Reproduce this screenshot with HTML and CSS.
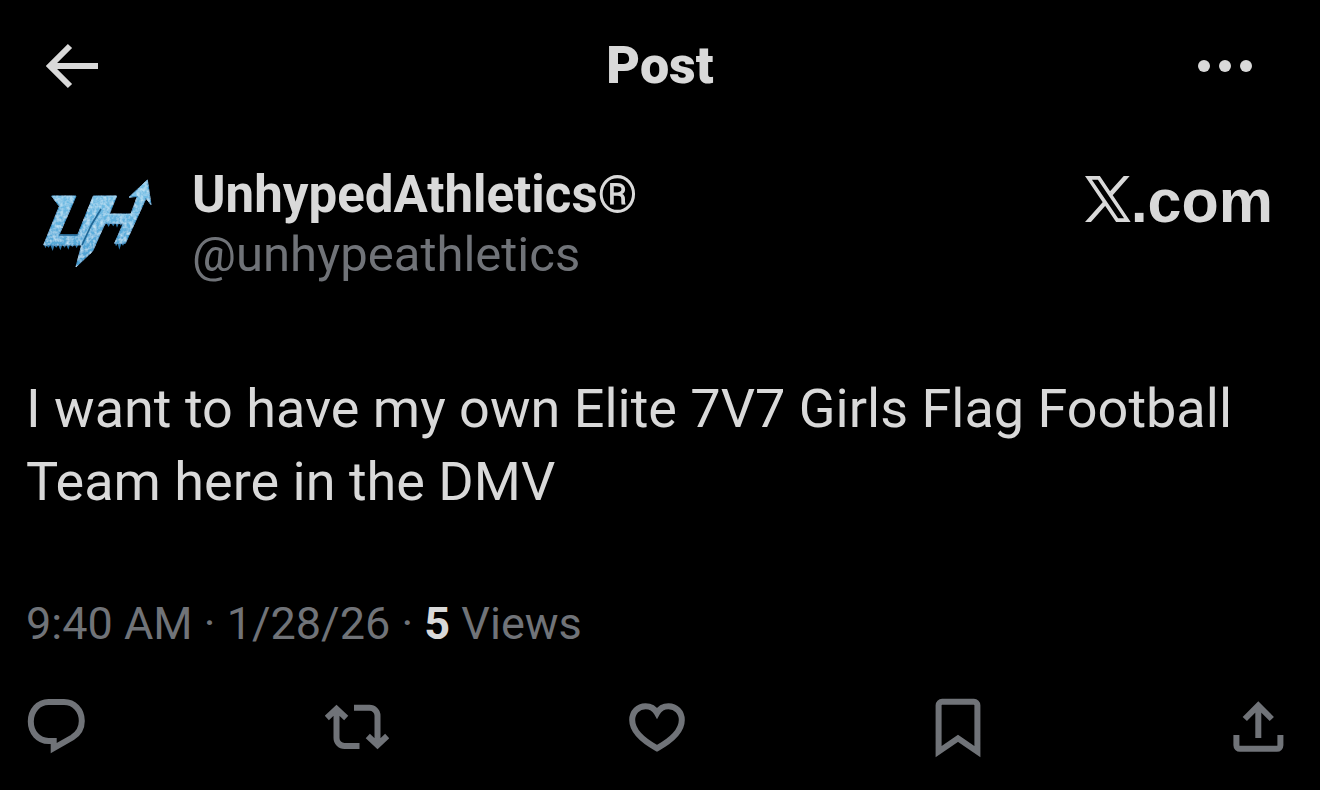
FILE: index.html
```html
<!DOCTYPE html>
<html lang="en">
<head>
    <meta charset="UTF-8">
    <meta name="viewport" content="width=device-width, initial-scale=1.0">
    <title>Post</title>
    <link rel="stylesheet" href="styles.css">
</head>
<body>
    <!-- Top Bar -->
    <header class="topbar">
        <button class="icon-btn back" type="button" aria-label="Back">
            <svg width="56" height="56" viewBox="0 0 56 56"><path d="M26 8L6 28L26 48M6 28H54"/></svg>
        </button>
        <h1>Post</h1>
        <button class="icon-btn more" type="button" aria-label="More">
            <svg width="56" height="56" viewBox="0 0 56 56">
                <circle cx="7" cy="28" r="6"/>
                <circle cx="28" cy="28" r="6"/>
                <circle cx="49" cy="28" r="6"/>
            </svg>
        </button>
    </header>

    <main class="post">
        <!-- Author -->
        <div class="author">
            <svg class="avatar" viewBox="18 0 360 360" aria-hidden="true">
                <defs>
                    <linearGradient id="ice" x1="0" y1="0" x2="0" y2="1">
                        <stop offset="0" stop-color="#7cc4e8"/>
                        <stop offset="0.5" stop-color="#62b2de"/>
                        <stop offset="1" stop-color="#4a9fd2"/>
                    </linearGradient>
                    <filter id="frost">
                        <feTurbulence type="fractalNoise" baseFrequency="0.1" numOctaves="2" seed="4"/>
                        <feColorMatrix values="0 0 0 0 0.66  0 0 0 0 0.86  0 0 0 0 0.95  1.6 0 0 0 -0.6"/>
                        <feComposite in2="SourceGraphic" operator="in" result="grain"/>
                        <feMerge>
                            <feMergeNode in="SourceGraphic"/>
                            <feMergeNode in="grain"/>
                        </feMerge>
                    </filter>
                </defs>
                <!-- icicles -->
                <path fill="#2c78ab" d="M42 238l4 12 4-8 6 6 5-8 7 18 5-16 6 6 6-8 6 16 6-16 7 8 5-8 6 14 5-14 8 6 6-8 6 12 8-18zM218 172l5 12 6-10 7 12 6-12 8 10 6-10 5 14 6-14 6 8 8-14zM254 232l4 12 5-8 5 18 6-18 5 6 7-12zM168 250l2 26 6-18 6 10 8-30z"/>
                <g filter="url(#frost)">
                    <path fill="url(#ice)" stroke="#3c8fc4" stroke-width="3" d="M65 93H138L129 114L87 210H143L190 93H260L238 147H303L322 94L297 97L352 45L363 119L348 100L286 235H254L280 175H225L205 220L188 258L138 306L155 240H41L88 124Z"/>
                </g>
                <path fill="none" stroke="#1f6796" stroke-width="5" d="M213 132L184 180L156 240M87 210H143"/>
                <path fill="none" stroke="#a5dbf2" stroke-width="2" d="M68 94H136M192 94H258M224 149H302"/>
            </svg>
            <div class="names">
                <a class="name" href="#">UnhypedAthletics®</a>
                <a class="handle" href="#">@unhypeathletics</a>
            </div>
            <div class="brand">
                <svg width="46" height="46" viewBox="43 438 139 139" role="img" aria-label="X">
                    <path fill-rule="evenodd" d="M43 438H88L181 577H137ZM64 449L143 566H161L82 449Z"/>
                    <path d="M160 438H178L126 497L118 485ZM43 577H61L107 525L99 514Z"/>
                </svg>
                <span>.com</span>
            </div>
        </div>

        <!-- Post Text -->
        <p class="text">I want to have my own Elite 7V7 Girls Flag Football Team here in the DMV</p>

        <div class="meta">9:40 AM · 1/28/26 · <strong>5</strong> Views</div>

        <!-- Actions -->
        <div class="actions">
            <button class="icon-btn" type="button" aria-label="Reply">
                <svg width="64" height="64" viewBox="0 0 64 64"><path d="M24.5 7H40C50 7 57.8 15 57.8 26C57.8 33 54 39 48.3 42.5L29.7 53V46H24.5C14.5 46 6.8 37.5 6.8 26.5S14.5 7 24.5 7Z"/></svg>
            </button>
            <button class="icon-btn" type="button" aria-label="Repost">
                <svg width="64" height="64" viewBox="0 0 64 64"><path d="M11.5 14V43a8 8 0 0 0 8 8H34.5M1.8 23L11.5 13.8L21.2 23M29 12.7H44.5a8 8 0 0 1 8 8V50M42.8 41L52.5 50.2L62.2 41"/></svg>
            </button>
            <button class="icon-btn" type="button" aria-label="Like">
                <svg width="64" height="64" viewBox="0 0 64 64"><path d="M32 18C29.5 13.5 25.5 11.2 20.5 11.2C13 11.2 7.2 17 7.2 25C7.2 36 17 45 32 53.3C47 45 56.8 36 56.8 25C56.8 17 51 11.2 43.5 11.2C38.5 11.2 34.5 13.5 32 18Z"/></svg>
            </button>
            <button class="icon-btn" type="button" aria-label="Bookmark">
                <svg width="64" height="64" viewBox="0 0 64 64"><path d="M12.6 56.6V10.3a3.5 3.5 0 0 1 3.5-3.5H47.9a3.5 3.5 0 0 1 3.5 3.5V56.6L32 43.3Z"/></svg>
            </button>
            <button class="icon-btn" type="button" aria-label="Share">
                <svg width="64" height="64" viewBox="0 0 64 64"><path d="M32.3 10.5V43M18.8 24L32.3 10.4L45.8 24M10.4 40V50.3a3.5 3.5 0 0 0 3.5 3.5H50.9a3.5 3.5 0 0 0 3.5-3.5V40"/></svg>
            </button>
        </div>
    </main>
</body>
</html>
```
FILE: styles.css
```css
body {
    font-family: Roboto, "Liberation Sans", sans-serif;
    margin: 0;
    padding: 0;
    background-color: #000;
    color: #d9d9d9;
}

a {
    color: inherit;
    text-decoration: none;
}

.icon-btn {
    display: block;
    padding: 0;
    border: 0;
    background: none;
    color: inherit;
    cursor: pointer;
}
.icon-btn svg {
    display: block;
    fill: none;
    stroke: currentColor;
    stroke-width: 6;
}

/* Top Bar */
.topbar {
    display: grid;
    grid-template-columns: 1fr auto 1fr;
    align-items: center;
    padding: 36px 44px 0;
}
.topbar h1 {
    margin: 0;
    font-size: 52px;
    line-height: 60px;
    font-weight: 900;
}
.back {
    justify-self: start;
}
.more {
    justify-self: end;
    margin-right: 23px;
}
.more svg {
    fill: currentColor;
    stroke: none;
}

/* Author */
.author {
    display: flex;
    align-items: flex-start;
    padding: 69px 47px 0 36px;
}
.avatar {
    width: 120px;
    height: 120px;
}
.names {
    display: flex;
    flex-direction: column;
    flex: 1;
    padding-left: 36px;
    font-size: 49px;
    line-height: 60px;
}
.name {
    font-size: 51px;
    font-weight: 700;
}
.handle {
    color: #707378;
}
.brand {
    display: flex;
    align-items: baseline;
    font-family: "Liberation Sans", Arial, sans-serif;
    font-size: 61px;
    line-height: 72px;
    font-weight: 700;
}
.brand svg {
    fill: currentColor;
}

/* Post Text */
.text {
    margin: 0;
    padding: 87px 26px 0;
    font-size: 54px;
    line-height: 73px;
}
.meta {
    padding: 76px 26px 0;
    font-size: 45px;
    line-height: 60px;
    color: #707378;
}
.meta strong {
    color: #d9d9d9;
}

/* Actions */
.actions {
    display: flex;
    justify-content: space-between;
    padding: 41px 30px 24px 24px;
    color: #707378;
}
```
